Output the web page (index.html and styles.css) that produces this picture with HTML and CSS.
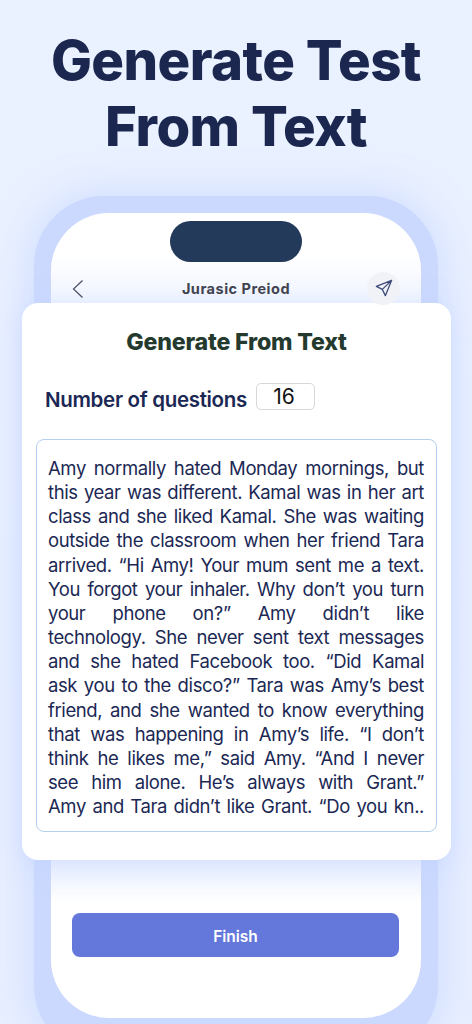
FILE: index.html
```html
<!DOCTYPE html>
<html lang="en">
<head>
<meta charset="utf-8">
<title>Generate Test From Text</title>
<link rel="stylesheet" href="styles.css">
</head>
<body>
<main class="page">
  <h1 class="headline">Generate Test<br>From Text</h1>
  <section class="phone">
    <div class="screen">
      <div class="island"></div>
      <header class="nav">
        <svg class="back" viewBox="0 0 12 20" width="12" height="20" aria-hidden="true"><path d="M10.5 1.5 1.5 10l9 8.5" fill="none" stroke="#4a4f63" stroke-width="1.2"/></svg>
        <span class="nav-title">Jurasic Preiod</span>
        <span class="send"><svg viewBox="0 0 20 20" width="18" height="18" aria-hidden="true"><path d="M18.5 1.5 1.5 8.2l6.6 3.3 3.4 7zM18.5 1.5 8.1 11.5" fill="none" stroke="#3d4a78" stroke-width="1.4" stroke-linejoin="round"/></svg></span>
      </header>
      <div class="fade"></div>
      <button class="finish">Finish</button>
    </div>
  </section>
  <section class="card">
    <h2 class="card-title">Generate From Text</h2>
    <div class="count-row">
      <span class="count-label">Number of questions</span>
      <span class="count-box">16</span>
    </div>
    <div class="textbox"><p class="passage">Amy normally hated Monday mornings, but<br>this year was different. Kamal was in her art<br>class and she liked Kamal. She was waiting<br>outside the classroom when her friend Tara<br>arrived. “Hi Amy! Your mum sent me a text.<br>You forgot your inhaler. Why don’t you turn<br>your phone on?” Amy didn’t like<br>technology. She never sent text messages<br>and she hated Facebook too. “Did Kamal<br>ask you to the disco?” Tara was Amy’s best<br>friend, and she wanted to know everything<br>that was happening in Amy’s life. “I don’t<br>think he likes me,” said Amy. “And I never<br>see him alone. He’s always with Grant.”<br>Amy and Tara didn’t like Grant. “Do you kn..</p></div>
  </section>
</main>
</body>
</html>
```
FILE: styles.css
```css
* { box-sizing: border-box; }
html, body { margin: 0; padding: 0; }
body { width: 472px; height: 1024px; overflow: hidden; background: #e9f0ff; font-family: Inter, "Liberation Sans", sans-serif; }
.page { position: relative; width: 472px; height: 1024px; overflow: hidden; padding-top: 27px; background: linear-gradient(180deg, #eaf1ff 0%, #e8efff 100%); }
.headline { margin: 0; text-align: center; font-size: 54.5px; line-height: 66px; font-weight: 800; letter-spacing: -.55px; color: #1c2750; }
.phone { width: 404px; height: 860px; margin: 37px 0 0 34px; padding: 17px; border-radius: 70px; background: #cbd9fe; box-shadow: 0 0 34px 6px rgba(190, 208, 255, .55); }
.screen { position: relative; height: 805px; border-radius: 58px; background: #fff; display: flex; flex-direction: column; align-items: center; overflow: hidden; }
.island { width: 132px; height: 41px; margin-top: 8px; border-radius: 21px; background: #233a5b; }
.nav { width: 100%; height: 34px; margin-top: 9px; padding: 0 21px; display: grid; grid-template-columns: 1fr auto 1fr; align-items: center; }
.back { margin-top: 2px; }
.nav-title { font-size: 14.5px; font-weight: 700; letter-spacing: .5px; color: #40434f; }
.send { justify-self: end; width: 33px; height: 33px; border-radius: 50%; background: #f0f2f8; display: flex; align-items: center; justify-content: center; }
.screen::before { content: ""; position: absolute; left: 0; right: 0; top: 40px; height: 60px; background: linear-gradient(180deg, #fff, #eef3ff); }
.island, .nav { position: relative; z-index: 1; }
.fade { position: absolute; left: 0; right: 0; top: 640px; height: 50px; background: linear-gradient(180deg, #e6edfe, #fff); }
.finish { position: absolute; left: 21px; top: 700px; width: 327px; height: 44px; padding-top: 4px; border: 0; border-radius: 8px; background: #6477da; color: #fff; font: 600 15.5px Inter, "Liberation Sans", sans-serif; }
.card { position: absolute; left: 22px; top: 303px; width: 429px; height: 557px; border-radius: 16px; background: #fff; padding: 0 14px; box-shadow: 0 4px 26px rgba(190, 208, 255, .5); }
.card-title { margin: 24px 0 0; text-align: center; font-size: 23.2px; line-height: 30px; font-weight: 800; letter-spacing: -.2px; color: #243a2f; }
.count-row { margin: 26px 0 0 9px; display: flex; align-items: flex-start; gap: 9px; height: 29px; }
.count-label { padding-top: 4px; font-size: 20.5px; line-height: 26px; font-weight: 600; letter-spacing: -.32px; color: #1b2854; }
.count-box { width: 59px; height: 27px; padding-right: 3px; border: 1px solid #d6d8dc; border-radius: 5px; text-align: center; font-size: 21px; line-height: 25px; color: #111; }
.textbox { margin: 27px 0 0; width: 401px; height: 393px; padding: 16px 12px 0 11px; border: 1px solid #b5cfee; border-radius: 8px; }
.passage { margin: 0; font-size: 18.5px; line-height: 24.15px; font-weight: 420; letter-spacing: -.4px; text-align: justify; text-align-last: justify; color: #1b2854; }
```
